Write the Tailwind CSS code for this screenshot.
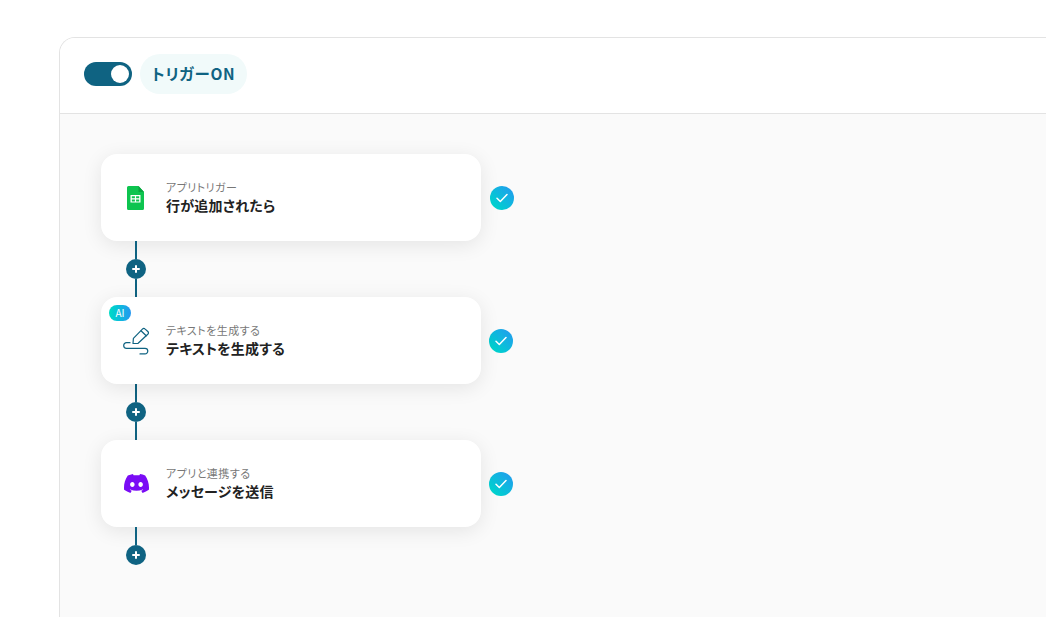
<!DOCTYPE html>
<html lang="ja">
<head>
    <meta charset="UTF-8">
    <title>フローボット</title>
    <script src="https://cdn.jsdelivr.net/npm/@tailwindcss/browser@4"></script>
</head>
<body class="bg-white h-screen overflow-hidden font-['Noto_Sans_CJK_JP','Noto_Sans',sans-serif] [font-feature-settings:'palt']">
    <div class="pl-[59px] pt-[37px] h-full">
        <div class="h-[600px] border border-r-0 border-[#e3e3e3] rounded-tl-2xl overflow-hidden flex flex-col">
            <!-- header -->
            <div class="h-[76px] bg-white border-b border-[#e3e3e3] flex items-start pt-4 pl-6 shrink-0">
                <div class="mt-2 w-12 h-6 rounded-full bg-[#0f6382] flex items-center justify-end pr-[3px]">
                    <div class="w-[18px] h-[18px] rounded-full bg-white"></div>
                </div>
                <div class="ml-2 h-10 w-[107px] rounded-full bg-[#f1fafa] flex items-center justify-center text-[15.500px] font-bold tracking-[0.7px] text-[#0f6382]">トリガーON</div>
            </div>

            <!-- flow -->
            <div class="flex-1 bg-[#fafafa] pl-[41px] pt-10">
                <!-- step 1 -->
                <div class="flex items-center">
                    <div class="w-[380px] h-[87px] bg-white rounded-2xl shadow-[0_4px_20px_rgba(0,0,0,0.09)] flex items-center pl-[25px]">
                        <div class="w-5 h-6 flex items-center justify-center">
                            <svg width="17" height="24" viewBox="0 0 17 24" class="-ml-px">
                                <path d="M1.500 0h10L17 6v16.500a1.500 1.500 0 0 1-1.500 1.500H1.500A1.500 1.500 0 0 1 0 22.500V1.500A1.500 1.500 0 0 1 1.500 0z" fill="#0dc44f"/>
                                <path d="M11.500 0L17 6h-5.500z" fill="#08a53f"/>
                                <path d="M3.500 9h10v7.500h-10z M4.800 10.200v2h3.100v-2z M9.100 10.200v2h3.100v-2z M4.800 13.400v2h3.100v-2z M9.100 13.400v2h3.100v-2z" fill="#fff" fill-rule="evenodd"/>
                            </svg>
                        </div>
                        <div class="ml-5 mb-[1px]">
                            <p class="text-[11px] tracking-[0.45px] leading-4 text-[#777]">アプリトリガー</p>
                            <p class="text-sm tracking-[0.2px] leading-5 font-bold text-[#222]">行が追加されたら</p>
                        </div>
                    </div>
                    <div class="ml-[9px] w-6 h-6 rounded-full bg-linear-to-tr from-[#00dcc4] to-[#2496f0] flex items-center justify-center">
                        <svg width="12" height="10" viewBox="0 0 12 10" fill="none" stroke="#fff" stroke-width="1.500" stroke-linecap="round" stroke-linejoin="round"><path d="M1 5.200l3.300 3.300L11 1.500"/></svg>
                    </div>
                </div>
                <div class="ml-[25px] w-5 h-14 flex flex-col items-center">
                    <div class="w-0.5 flex-1 bg-[#0f6382]"></div>
                    <div class="w-5 h-5 rounded-full bg-[#0f6382] flex items-center justify-center">
                        <svg width="8" height="8" viewBox="0 0 8 8" stroke="#fff" stroke-width="2" stroke-linecap="round"><path d="M4 1v6M1 4h6"/></svg>
                    </div>
                    <div class="w-0.5 flex-1 bg-[#0f6382]"></div>
                </div>

                <!-- step 2 -->
                <div class="flex items-center">
                    <div class="relative w-[380px] h-[87px] bg-white rounded-2xl shadow-[0_4px_20px_rgba(0,0,0,0.09)] flex items-center pl-[25px]">
                        <span class="absolute left-2 top-2 w-[22px] h-4 rounded-full bg-linear-to-r from-[#00dcc4] to-[#2496f0] text-white text-[10px] leading-4 text-center">AI</span>
                        <div class="w-5 h-6 flex items-center justify-center">
                            <svg width="26" height="28" viewBox="0 0 26 28" fill="none" stroke="#0f6382" stroke-width="1.200" stroke-linecap="round" stroke-linejoin="round" class="shrink-0">
                                <path d="M10 16.500l.4-5.200 9-9.200a2 2 0 0 1 2.800 0l2.600 2.400a2 2 0 0 1 0 2.800l-9.700 9z"/>
                                <path d="M18 3.800l5.200 5"/>
                                <path d="M7 15.700H3.500a2.800 2.800 0 0 0 0 5.600H22a2.800 2.800 0 0 1 0 5.600h-5"/>
                            </svg>
                        </div>
                        <div class="ml-5 mb-[1px]">
                            <p class="text-[11px] tracking-[0.45px] leading-4 text-[#777]">テキストを生成する</p>
                            <p class="text-sm tracking-[0.2px] leading-5 font-bold text-[#222]">テキストを生成する</p>
                        </div>
                    </div>
                    <div class="ml-2 w-6 h-6 rounded-full bg-linear-to-tr from-[#00dcc4] to-[#2496f0] flex items-center justify-center">
                        <svg width="12" height="10" viewBox="0 0 12 10" fill="none" stroke="#fff" stroke-width="1.500" stroke-linecap="round" stroke-linejoin="round"><path d="M1 5.200l3.300 3.300L11 1.500"/></svg>
                    </div>
                </div>
                <div class="ml-[25px] w-5 h-14 flex flex-col items-center">
                    <div class="w-0.5 flex-1 bg-[#0f6382]"></div>
                    <div class="w-5 h-5 rounded-full bg-[#0f6382] flex items-center justify-center">
                        <svg width="8" height="8" viewBox="0 0 8 8" stroke="#fff" stroke-width="2" stroke-linecap="round"><path d="M4 1v6M1 4h6"/></svg>
                    </div>
                    <div class="w-0.5 flex-1 bg-[#0f6382]"></div>
                </div>

                <!-- step 3 -->
                <div class="flex items-center">
                    <div class="w-[380px] h-[87px] bg-white rounded-2xl shadow-[0_4px_20px_rgba(0,0,0,0.09)] flex items-center pl-[25px]">
                        <div class="w-5 h-6 flex items-center justify-center">
                            <svg width="25" height="19" viewBox="0 0 127.140 96.360" class="shrink-0">
                                <path fill="#7a0cf5" d="M107.700 8.070A105.150 105.150 0 0 0 81.470 0a72.060 72.060 0 0 0-3.360 6.830 97.680 97.680 0 0 0-29.110 0A72.370 72.370 0 0 0 45.640 0a105.890 105.890 0 0 0-26.250 8.090C2.790 32.650-1.710 56.600.54 80.210a105.730 105.730 0 0 0 32.170 16.150 77.700 77.700 0 0 0 6.890-11.110 68.420 68.420 0 0 1-10.850-5.180c.91-.66 1.800-1.340 2.660-2a75.570 75.570 0 0 0 64.320 0c.87.710 1.760 1.390 2.660 2a68.680 68.680 0 0 1-10.870 5.190 77 77 0 0 0 6.890 11.100 105.250 105.250 0 0 0 32.190-16.140c2.640-27.380-4.510-51.110-18.900-72.150zM42.450 65.690C36.180 65.690 31 60 31 53s5-12.740 11.430-12.740S54 46 53.890 53s-5.050 12.690-11.440 12.690zm42.240 0C78.410 65.690 73.250 60 73.250 53s5-12.740 11.440-12.740S96.230 46 96.120 53s-5.040 12.690-11.430 12.690z"/>
                            </svg>
                        </div>
                        <div class="ml-5 mb-[1px]">
                            <p class="text-[11px] tracking-[0.45px] leading-4 text-[#777]">アプリと連携する</p>
                            <p class="text-sm tracking-[0.2px] leading-5 font-bold text-[#222]">メッセージを送信</p>
                        </div>
                    </div>
                    <div class="ml-2 w-6 h-6 rounded-full bg-linear-to-tr from-[#00dcc4] to-[#2496f0] flex items-center justify-center">
                        <svg width="12" height="10" viewBox="0 0 12 10" fill="none" stroke="#fff" stroke-width="1.500" stroke-linecap="round" stroke-linejoin="round"><path d="M1 5.200l3.300 3.300L11 1.500"/></svg>
                    </div>
                </div>
                <div class="ml-[25px] w-5 flex flex-col items-center">
                    <div class="w-0.5 h-[18px] bg-[#0f6382]"></div>
                    <div class="w-5 h-5 rounded-full bg-[#0f6382] flex items-center justify-center">
                        <svg width="8" height="8" viewBox="0 0 8 8" stroke="#fff" stroke-width="2" stroke-linecap="round"><path d="M4 1v6M1 4h6"/></svg>
                    </div>
                </div>
            </div>
        </div>
    </div>
</body>
</html>
